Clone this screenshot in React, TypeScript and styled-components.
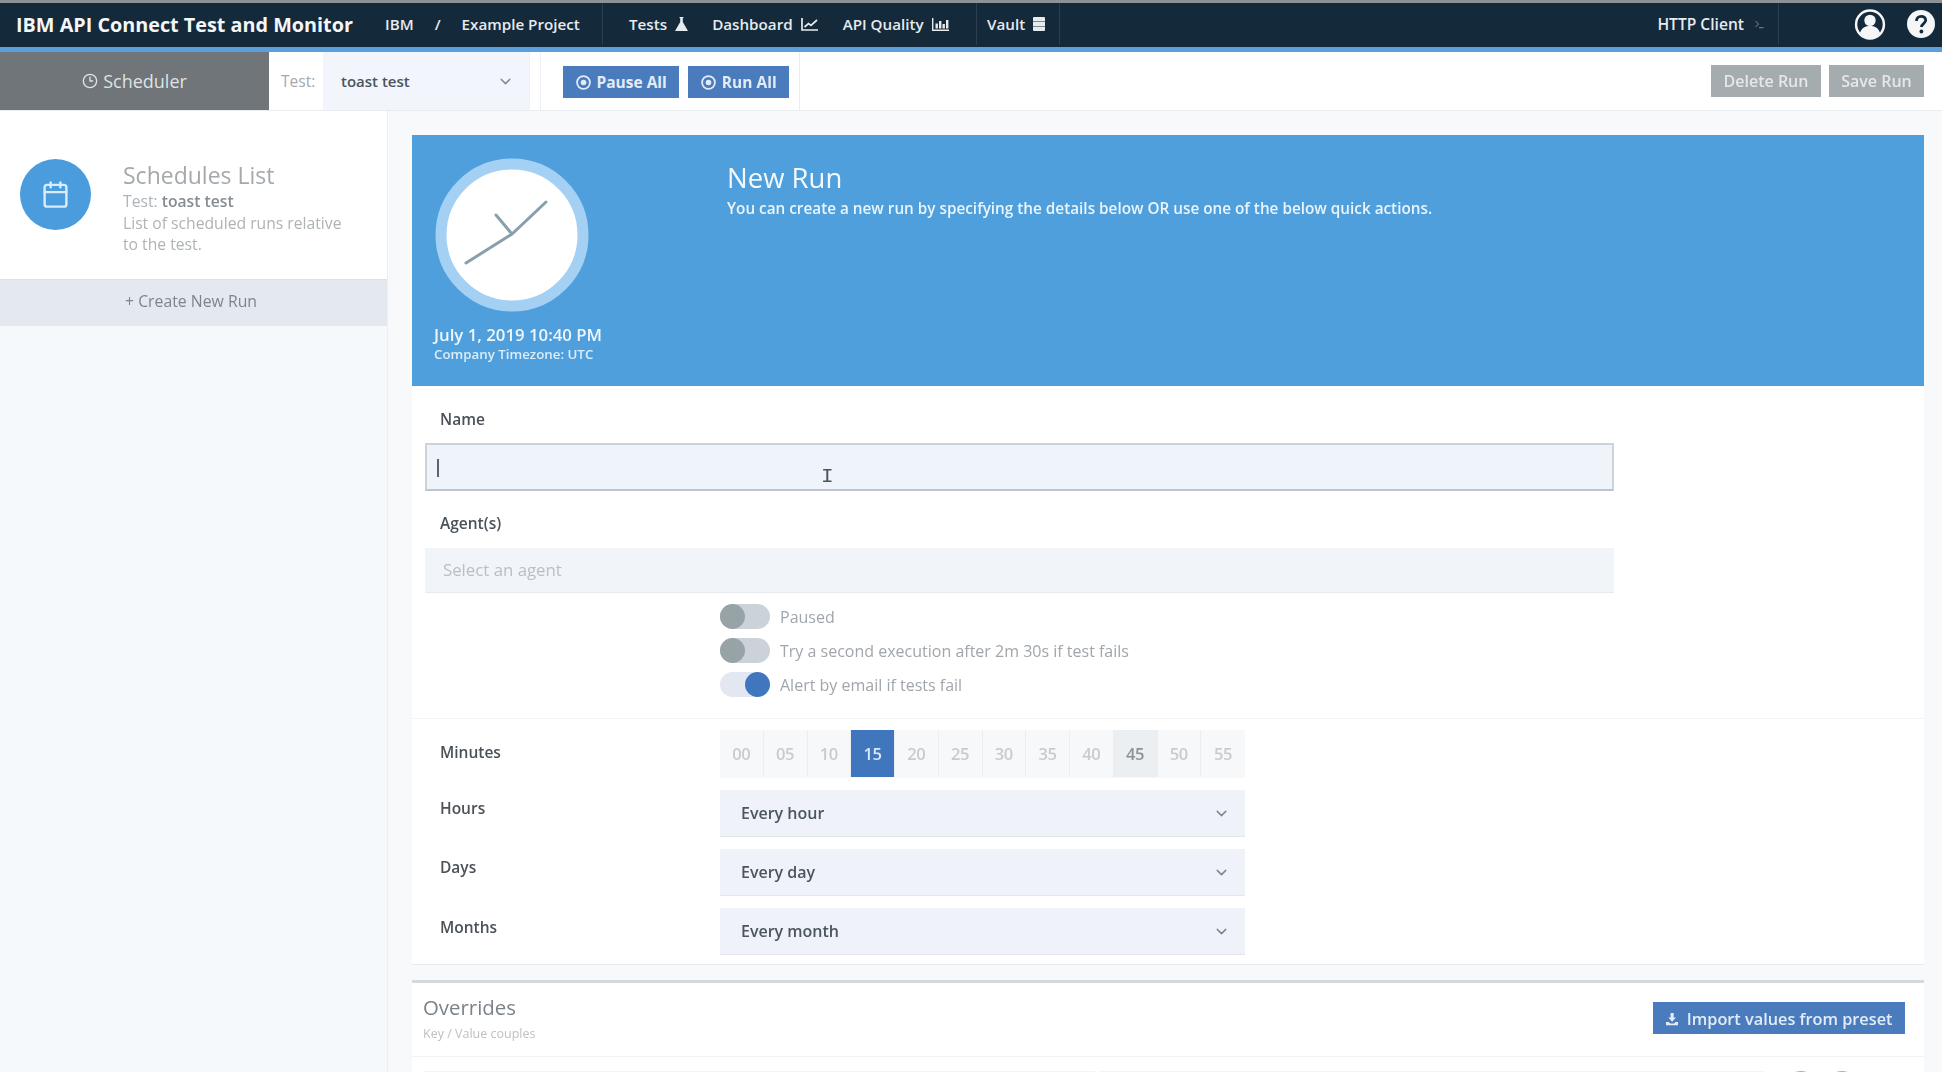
import React from "react";
import styled, { createGlobalStyle } from "styled-components";
import { ChevronDown, Calendar, Clock3, Terminal } from "lucide-react";

const Global = createGlobalStyle`
  html, body { margin: 0; padding: 0; background: #f7f9fb; }
  body { font-family: "Open Sans", "Liberation Sans", sans-serif; color: #3c4650; }
  * { box-sizing: border-box; }
`;

const Page = styled.div`
  width: 1942px; height: 1072px; overflow: hidden; display: flex; flex-direction: column;
  filter: blur(0.7px);
`;

const TopBar = styled.header`
  height: 52px; flex: none; display: flex; align-items: center; padding-bottom: 2px;
  background: #14293a; border-top: 3px solid #8d9296; border-bottom: 5px solid #5b9fdc;
  color: #e6ebef; font-size: 15px; font-weight: 600;
`;
const Brand = styled.div`
  font-size: 19.8px; font-weight: 700; margin-left: 16px; width: 369px; color: #f4f6f8; white-space: nowrap;
`;
const Crumb = styled.div`
  width: 218px; height: 100%; display: flex; gap: 21px; align-items: center; white-space: nowrap;
  border-right: 1px solid #2a3e4e; font-size: 15.2px;
`;
const NavGroup = styled.nav`
  display: flex; align-items: center; height: 100%; gap: ${p => p.$gap || 0}px; padding-left: ${p => p.$pad}px;
  width: ${p => p.$w}px; border-right: 1px solid #2a3e4e;
`;
const NavItem = styled.span`
  display: inline-flex; align-items: center; gap: 8px; white-space: nowrap; font-size: 15.2px;
`;
const Spacer = styled.div`flex: 1;`;
const HttpClient = styled(NavItem)`
  height: 100%; padding-right: 13px; border-right: 1px solid #2a3e4e; margin-right: 75px; gap: 10px; font-size: 15.6px;
`;
const TopIcons = styled.div`
  display: flex; align-items: center; gap: 21px; padding-right: 7px;
`;

const Toolbar = styled.div`
  height: 59px; flex: none; display: flex; align-items: stretch; background: #fff; border-bottom: 1px solid #e9edf0;
`;
const SchedulerTab = styled.div`
  width: 269px; background: #6f7578; color: #dfe3e5; display: flex; align-items: center; justify-content: center;
  gap: 5px; font-size: 18px; font-weight: 500;
`;
const TestLabel = styled.div`
  width: 54px; padding-left: 12px; display: flex; align-items: center; font-size: 15.5px; color: #a3a9ae;
`;
const TestSelect = styled.div`
  width: 207px; background: #f2f5fb; display: flex; align-items: center; justify-content: space-between;
  padding: 0 15px 0 18px; font-size: 15px; font-weight: 600; color: #4a545d; border-right: 1px solid #eef0f3;
`;
const ActionGroup = styled.div`
  display: flex; align-items: center; gap: 9px; padding: 1px 0 0 22px; width: 260px; border-left: 1px solid #eef0f3;
  margin-left: 10px; border-right: 1px solid #e9edf0;
`;
const BlueButton = styled.button`
  display: inline-flex; align-items: center; justify-content: center; gap: 6px; height: 32px; padding: 1px 12.500px 0;
  background: #4a7cbd; color: #e3ecf6; border: 0; font: 700 15.5px "Open Sans", sans-serif; white-space: nowrap;
`;
const ToolbarRight = styled.div`
  margin-left: auto; display: flex; align-items: center; gap: 8px; padding-right: 18px;
`;
const GreyButton = styled.button`
  height: 32px; width: ${p => p.$w}px; background: #a4acaf; color: #e4e8e9; border: 0; font: 600 16px "Open Sans", sans-serif;
  white-space: nowrap; padding: 0;
`;

const Body = styled.div`
  flex: 1; display: flex; min-height: 0;
`;
const Sidebar = styled.aside`
  width: 388px; flex: none; background: #f6f9fc; border-right: 1px solid #eceff2;
`;
const ListHead = styled.div`
  height: 168px; background: #fff; display: flex; padding: 48px 0 0 20px; gap: 32px;
`;
const Avatar = styled.div`
  width: 71px; height: 71px; border-radius: 50%; background: #4a9cdc; color: #d8ecfa; flex: none;
  display: flex; align-items: center; justify-content: center; margin-top: 0;
`;
const ListText = styled.div`
  padding-top: 3px; color: #adb3b7; font-size: 15.7px; line-height: 21.5px; width: 232px;
`;
const ListTitle = styled.div`
  font-size: 23px; font-weight: 400; line-height: 26px; color: #a3a9ad; margin-bottom: 3px;
`;
const ListStrong = styled.span`
  color: #868d92; font-weight: 600;
`;
const CreateRow = styled.div`
  height: 47px; background: #e4e9ef; color: #7c858c; font-size: 15.8px; font-weight: 500; display: flex; align-items: center;
  padding: 0 0 4px 125px; border-top: 1px solid #dde2e6;
`;

const Main = styled.main`
  flex: 1; padding: 24px 18px 0 24px; min-width: 0;
`;
const Banner = styled.section`
  height: 251px; background: #4f9fdd; display: flex; color: #fff;
`;
const ClockCol = styled.div`
  width: 315px; flex: none; padding: 23px 0 0 23px;
`;
const ClockFace = styled.svg`
  display: block; width: 154px; height: 154px;
`;
const DateLine = styled.div`
  font-size: 16.8px; font-weight: 600; line-height: 19px; margin: 13px 0 0 -1px; white-space: nowrap; color: #eef6fc;
`;
const ZoneLine = styled.div`
  font-size: 13.3px; font-weight: 600; line-height: 20px; margin-left: -1px; white-space: nowrap; color: #dcedf9;
`;
const BannerText = styled.div`
  padding-top: 26px;
`;
const BannerTitle = styled.div`
  font-size: 27.5px; line-height: 34px; font-weight: 400; color: #f2f8fc; margin-bottom: 3px;
`;
const BannerSub = styled.div`
  font-size: 15.3px; line-height: 20px; font-weight: 600; white-space: nowrap; color: #eaf4fb;
`;

const Card = styled.section`
  height: 579px; background: #fff; border-bottom: 1px solid #e6eaed; padding-top: 21px;
`;
const FieldLabel = styled.div`
  font-size: 15.5px; font-weight: 600; line-height: 24px; padding-left: 28px; color: #4a5158;
`;
const AgentLabel = styled(FieldLabel)`
  margin-top: 20px;
`;
const NameInput = styled.div`
  position: relative; margin: 12px 0 0 13px; width: 1189px; height: 48px; background: #eff4fb;
  border: 2px solid #cdd3da; border-bottom-color: #bcc4cd;
`;
const Caret = styled.span`
  position: absolute; left: 10px; top: 14px; width: 1.5px; height: 18px; background: #5a6670;
`;
const ICursor = styled.span`
  position: absolute; left: 394px; top: 20px; color: #4b5660; font: 400 21px "Liberation Mono", monospace; line-height: 24px;
`;
const AgentInput = styled.div`
  margin: 13px 0 0 13px; width: 1189px; height: 45px; background: #f1f4f9; display: flex; align-items: center;
  padding: 0 0 2px 18px; font-size: 16.8px; color: #b9bfc6; border-bottom: 1px solid #e6e9ee;
`;
const ToggleList = styled.div`
  display: flex; flex-direction: column; gap: 9px; padding: 11px 0 0 308px;
`;
const ToggleRow = styled.div`
  display: flex; align-items: center; gap: 10px; height: 25px; font-size: 16px; color: #a0a6ab;
`;
const Toggle = styled.span`
  position: relative; width: 50px; height: 25px; border-radius: 13px; background: ${p => p.$on ? "#e3e7f1" : "#cbd3d9"}; flex: none;
  &::after {
    content: ""; position: absolute; top: 0; width: 25px; height: 25px; border-radius: 50%;
    left: ${p => p.$on ? "25px" : "0"}; background: ${p => p.$on ? "#3f76bd" : "#98a3a8"};
  }
`;
const Divider = styled.div`
  height: 1px; background: #f1f3f5; margin-top: 21px;
`;
const ScheduleGrid = styled.div`
  display: grid; grid-template-columns: 308px 525px; row-gap: 12px; padding-top: 11px;
`;
const RowLabel = styled.div`
  font-size: 15.5px; font-weight: 600; color: #4a5158; padding-left: 28px; line-height: 22px; padding-top: ${p => p.$top}px;
`;
const Minutes = styled.div`
  display: grid; grid-template-columns: repeat(12, 1fr); height: 48px; background: #f6f8fa; padding-bottom: 1px;
`;
const Minute = styled.div`
  display: flex; align-items: center; justify-content: center; font-size: 16.5px; font-weight: 600; letter-spacing: -0.3px;
  border-right: 1px solid #ebeef0;
  background: ${p => p.$active ? "#3f76bd" : p.$hover ? "#eceff2" : "transparent"};
  color: ${p => p.$active ? "#dbe8f5" : p.$hover ? "#8b9298" : "#c7ccd0"};
  &:last-child { border-right: 0; }
`;
const SelectBox = styled.div`
  height: 47px; background: #eff3f9; display: flex; align-items: center; justify-content: space-between;
  padding: 0 15px 0 21px; font-size: 16px; font-weight: 600; color: #4c555d; border-bottom: 1px solid #e3e7ec;
`;

const Overrides = styled.section`
  margin-top: 15px; background: #fff; border-top: 3px solid #d5d9dc; height: 200px;
`;
const OverridesHead = styled.div`
  height: 74px; display: flex; justify-content: space-between; padding: 11px 19px 0 11px; border-bottom: 1px solid #f0f2f4;
`;
const OverridesTitle = styled.div`
  font-size: 20.4px; line-height: 26px; color: #7b8287;
`;
const OverridesSub = styled.div`
  font-size: 12.5px; line-height: 18px; margin-top: 5px; color: #bcc1c5;
`;
const ImportButton = styled(BlueButton)`
  width: 252px; height: 32px; margin-top: 8px; gap: 9px; font-size: 16.3px; font-weight: 600;
`;
const KeyValues = styled.div`
  display: flex; align-items: flex-start; padding: 14px 0 0 12px;
`;
const KeyInput = styled.div`
  width: ${p => p.$w}px; height: 40px; background: #f0f3f8; margin-right: 4px;
`;
const RoundAction = styled.span`
  width: 30px; height: 30px; border-radius: 50%; background: #a9b0b5; margin-left: ${p => p.$ml}px; flex: none;
`;

const minuteValues = ["00","05","10","15","20","25","30","35","40","45","50","55"];

const FlaskIcon = () => (
  <svg width="13" height="14" viewBox="0 0 13 14" aria-hidden="true"><path d="M4.500 0h4v1h-.7v4L13 14H0l5.200-9V1h-.7z" fill="currentColor" /></svg>
);
const LineChartIcon = () => (
  <svg width="18" height="14" viewBox="0 0 18 14" fill="none" stroke="currentColor" strokeWidth="1.700" aria-hidden="true">
    <path d="M1 1v12h16" /><path d="M3.500 10l4-3.500 2.500 2 6-5.500" />
  </svg>
);
const BarChartIcon = () => (
  <svg width="17" height="14" viewBox="0 0 17 14" fill="currentColor" aria-hidden="true">
    <path d="M0 1h1.400v11.600H17V14H0z" /><path d="M3.500 6.500h2.400v5H3.500zM7 4h2.400v7.500H7zM10.500 7h2.400v4.500h-2.400zM14 3h2.400v8.500H14z" />
  </svg>
);
const VaultIcon = () => (
  <svg width="12" height="14" viewBox="0 0 12 14" fill="currentColor" aria-hidden="true">
    <path d="M1 0h10a1 1 0 0 1 1 1v3.400H0V1a1 1 0 0 1 1-1zM0 5h12v4H0zM0 9.600h12V13a1 1 0 0 1-1 1H1a1 1 0 0 1-1-1z" />
  </svg>
);
const TargetIcon = () => (
  <svg width="15" height="15" viewBox="0 0 15 15" aria-hidden="true">
    <circle cx="7.500" cy="7.500" r="6.400" fill="none" stroke="currentColor" strokeWidth="1.800" />
    <circle cx="7.500" cy="7.500" r="2.800" fill="currentColor" />
  </svg>
);
const ImportIcon = () => (
  <svg width="16" height="16" viewBox="0 0 16 16" fill="currentColor" aria-hidden="true">
    <path d="M6 0h4v6h3l-5 5.500L3 6h3z" /><path d="M0 12h3.500l2 1.800h5l2-1.800H16v4H0z" />
  </svg>
);

function FormSelect({ value }: { value: string }) {
  return <SelectBox>{value}<ChevronDown size={17} color="#7c858c" /></SelectBox>;
}

export default function App() {
  return (
    <Page>
      <Global />
      <TopBar>
        <Brand>IBM API Connect Test and Monitor</Brand>
        <Crumb><span>IBM</span><span>/</span><span>Example Project</span></Crumb>
        <NavGroup $gap={24} $pad={26} $w={374}>
          <NavItem>Tests <FlaskIcon /></NavItem>
          <NavItem>Dashboard <LineChartIcon /></NavItem>
          <NavItem>API Quality <BarChartIcon /></NavItem>
        </NavGroup>
        <NavGroup $pad={10} $w={83}>
          <NavItem>Vault <VaultIcon /></NavItem>
        </NavGroup>
        <Spacer />
        <HttpClient>HTTP Client <Terminal size={11} color="#8c99a3" /></HttpClient>
        <TopIcons>
          <svg width="32" height="33" viewBox="0 0 30 32" aria-hidden="true">
            <circle cx="15" cy="16" r="13.500" fill="none" stroke="#f4f6f8" strokeWidth="2.400" />
            <circle cx="15" cy="12" r="5.500" fill="#f4f6f8" />
            <path d="M5 25c1.500-6 6-7.500 10-7.500s8.500 1.500 10 7.500c-3 3-6.500 4-10 4s-7-1-10-4z" fill="#f4f6f8" />
          </svg>
          <svg width="28" height="28" viewBox="0 0 28 28" aria-hidden="true">
            <circle cx="14" cy="14" r="14" fill="#f4f6f8" />
            <path d="M9.500 11c0-3 2.200-4.700 4.700-4.700s4.500 1.600 4.500 4c0 3.200-4.200 3.500-4.200 6.700" fill="none" stroke="#14293a" strokeWidth="2.800" />
            <circle cx="14.400" cy="21.500" r="1.900" fill="#14293a" />
          </svg>
        </TopIcons>
      </TopBar>
      <Toolbar>
        <SchedulerTab><Clock3 size={16} />Scheduler</SchedulerTab>
        <TestLabel>Test:</TestLabel>
        <TestSelect>toast test<ChevronDown size={17} color="#838c94" /></TestSelect>
        <ActionGroup>
          <BlueButton><TargetIcon />Pause All</BlueButton>
          <BlueButton><TargetIcon />Run All</BlueButton>
        </ActionGroup>
        <ToolbarRight>
          <GreyButton $w={110}>Delete Run</GreyButton>
          <GreyButton $w={95}>Save Run</GreyButton>
        </ToolbarRight>
      </Toolbar>
      <Body>
        <Sidebar>
          <ListHead>
            <Avatar><Calendar size={29} /></Avatar>
            <ListText>
              <ListTitle>Schedules List</ListTitle>
              Test: <ListStrong>toast test</ListStrong><br />
              List of scheduled runs relative to the test.
            </ListText>
          </ListHead>
          <CreateRow>+ Create New Run</CreateRow>
        </Sidebar>
        <Main>
          <Banner>
            <ClockCol>
              <ClockFace viewBox="0 0 154 154">
                <circle cx="77" cy="77" r="71" fill="#fff" stroke="#a4d0f3" strokeWidth="11" />
                <path d="M31 105 L77 76 L111 44 M77 76 L61 57" fill="none" stroke="#87a0ac" strokeWidth="3" strokeLinecap="round" />
              </ClockFace>
              <DateLine>July 1, 2019 10:40 PM</DateLine>
              <ZoneLine>Company Timezone: UTC</ZoneLine>
            </ClockCol>
            <BannerText>
              <BannerTitle>New Run</BannerTitle>
              <BannerSub>You can create a new run by specifying the details below OR use one of the below quick actions.</BannerSub>
            </BannerText>
          </Banner>
          <Card>
            <FieldLabel>Name</FieldLabel>
            <NameInput><Caret /><ICursor>I</ICursor></NameInput>
            <AgentLabel>Agent(s)</AgentLabel>
            <AgentInput>Select an agent</AgentInput>
            <ToggleList>
              <ToggleRow><Toggle />Paused</ToggleRow>
              <ToggleRow><Toggle />Try a second execution after 2m 30s if test fails</ToggleRow>
              <ToggleRow><Toggle $on />Alert by email if tests fail</ToggleRow>
            </ToggleList>
            <Divider />
            <ScheduleGrid>
              <RowLabel $top={11}>Minutes</RowLabel>
              <Minutes>
                {minuteValues.map(m => <Minute key={m} $active={m === "15"} $hover={m === "45"}>{m}</Minute>)}
              </Minutes>
              <RowLabel $top={7}>Hours</RowLabel>
              <FormSelect value="Every hour" />
              <RowLabel $top={7}>Days</RowLabel>
              <FormSelect value="Every day" />
              <RowLabel $top={8}>Months</RowLabel>
              <FormSelect value="Every month" />
            </ScheduleGrid>
          </Card>
          <Overrides>
            <OverridesHead>
              <div>
                <OverridesTitle>Overrides</OverridesTitle>
                <OverridesSub>Key / Value couples</OverridesSub>
              </div>
              <ImportButton><ImportIcon />Import values from preset</ImportButton>
            </OverridesHead>
            <KeyValues>
              <KeyInput $w={671} />
              <KeyInput $w={665} />
              <RoundAction $ml={18} />
              <RoundAction $ml={11} />
            </KeyValues>
          </Overrides>
        </Main>
      </Body>
    </Page>
  );
}
